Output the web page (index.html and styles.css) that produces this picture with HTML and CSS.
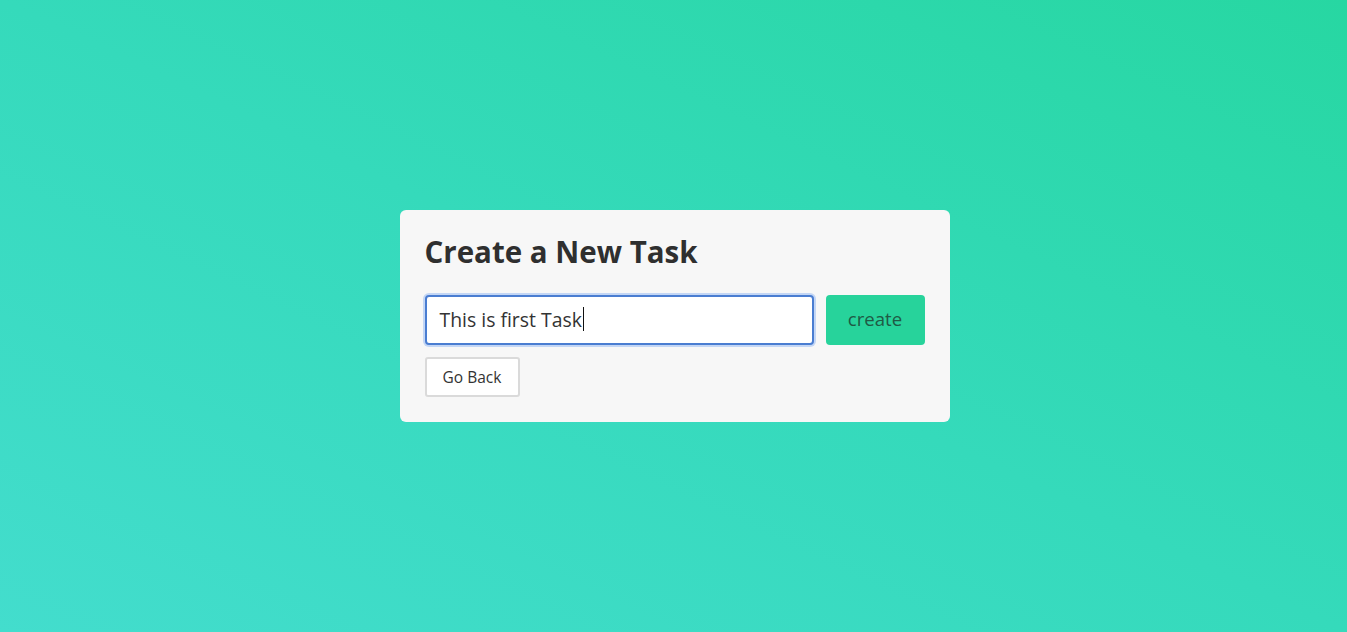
FILE: index.html
```html
<!DOCTYPE html>
<html lang="en">
<head>
<meta charset="utf-8">
<title>Create a New Task</title>
<link rel="stylesheet" href="styles.css">
</head>
<body>
<main class="page">
  <section class="card">
    <h1 class="card-title">Create a New Task</h1>
    <form class="task-form">
      <div class="task-input">This is first Task<span class="caret"></span></div>
      <button type="button" class="btn-create">create</button>
    </form>
    <button type="button" class="btn-back">Go Back</button>
  </section>
</main>
</body>
</html>
```
FILE: styles.css
```css
* { box-sizing: border-box; }
html, body { margin: 0; height: 100%; }
body {
  font-family: "Open Sans", Lato, sans-serif;
  color: #333;
  background: linear-gradient(to top right, #43ddcd 0%, #35dabb 50%, #27d7a2 100%);
}
.page {
  height: 632px;
  display: flex;
  align-items: center;
  justify-content: center;
  padding-left: 2px;
}
.card {
  width: 550px;
  height: 212px;
  background: #f7f7f7;
  border-radius: 6px;
  padding: 22px 25px 25px;
}
.card-title {
  margin: 0 0 23px;
  font-size: 29.5px;
  font-weight: 700;
  line-height: 40px;
  color: #2f2f2f;
}
.task-form {
  display: flex;
  gap: 12px;
  margin-bottom: 12px;
}
.task-input {
  width: 389px;
  height: 50px;
  background: #fff;
  border: 2px solid #4a7dd1;
  border-radius: 4px;
  box-shadow: 0 0 0 2px #c3d6f5;
  padding: 0 13px 2px;
  display: flex;
  align-items: center;
  font-size: 19.4px;
  color: #333;
}
.caret {
  display: inline-block;
  width: 1px;
  height: 24px;
  background: #111;
  margin-left: 1px;
}
.btn-create {
  width: 99px;
  height: 50px;
  border: none;
  border-radius: 4px;
  background: #27d39b;
  color: #1f5a45;
  font-family: inherit;
  font-size: 18.6px;
  padding: 0 0 3px;
}
.btn-back {
  display: block;
  width: 95px;
  height: 40px;
  background: #fff;
  border: 2px solid #dadada;
  border-radius: 3px;
  font-family: inherit;
  font-size: 15.5px;
  color: #333;
  padding: 0 0 1px;
}
```
